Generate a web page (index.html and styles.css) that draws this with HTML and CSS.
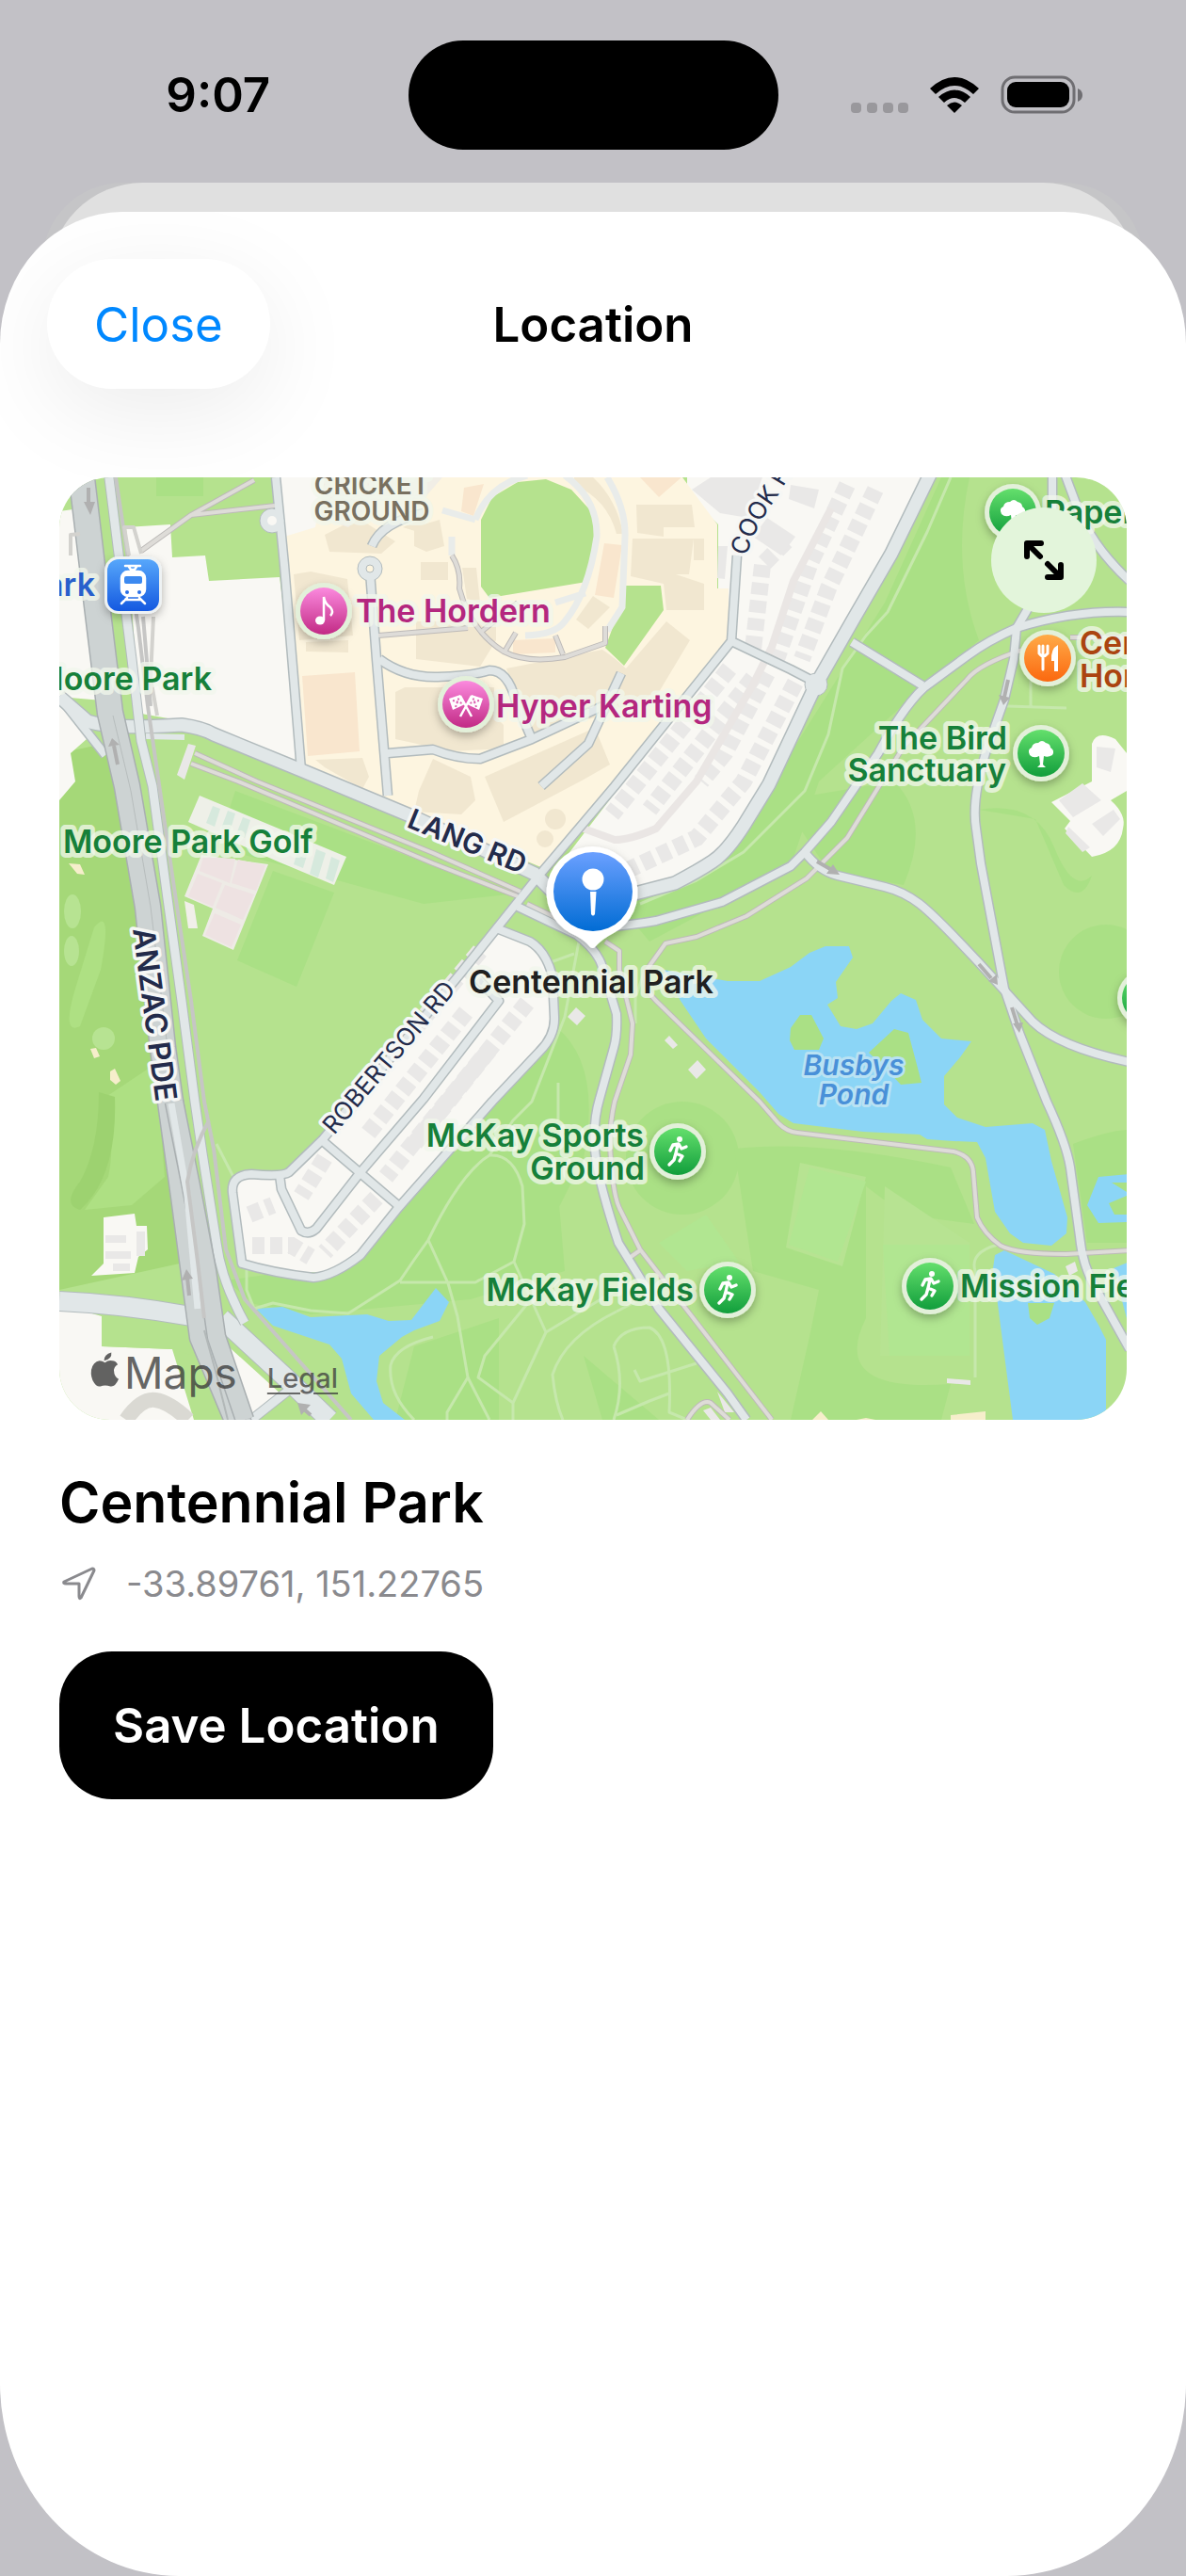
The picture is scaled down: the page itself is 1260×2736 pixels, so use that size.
FILE: index.html
```html
<!DOCTYPE html>
<html lang="en">
<head>
<meta charset="utf-8">
<meta name="viewport" content="width=device-width, initial-scale=1">
<title>Location</title>
<link rel="stylesheet" href="styles.css">
</head>
<body>
<div class="status">
  <div class="status-side"><time>9:07</time></div>
  <div class="island"></div>
  <div class="status-side">
    <svg class="signal" viewBox="0 0 246 42" aria-label="No signal, Wi-Fi on, battery full">
      <g fill="#99989c"><rect x="0" y="29" width="11" height="11" rx="4"/><rect x="17" y="29" width="11" height="11" rx="4"/><rect x="34" y="29" width="11" height="11" rx="4"/><rect x="50" y="29" width="11" height="11" rx="4"/></g>
      <path d="M84 14Q110-10 136 14L130 20Q110 2 90 20Z"/>
      <path d="M93 23Q110 8 127 23L121 29Q110 19 99 29Z"/>
      <path d="M102 32Q110 25 118 32L110 40Z"/>
      <rect x="161" y="2" width="76" height="37" rx="13" fill="none" stroke="#6f6e72" stroke-width="3"/>
      <rect x="166" y="7" width="66" height="27" rx="9"/>
      <path d="M241 14q5 2 5 7t-5 7z" fill="#6f6e72"/>
    </svg>
  </div>
</div>
<div class="stack">
<main class="sheet">
  <header class="bar">
    <button class="close" type="button">Close</button>
    <h1>Location</h1>
  </header>
  <section class="map" aria-label="Map">
    <svg class="canvas" viewBox="63 507 1134 1001">
      <defs>
        <linearGradient id="pink" x2="0" y2="1"><stop stop-color="#fb8ade"/><stop offset="1" stop-color="#c22a85"/></linearGradient>
        <linearGradient id="green" x2="0" y2="1"><stop stop-color="#64df6c"/><stop offset="1" stop-color="#119e3c"/></linearGradient>
        <linearGradient id="orange" x2="0" y2="1"><stop stop-color="#ffab48"/><stop offset="1" stop-color="#fb680f"/></linearGradient>
        <linearGradient id="sky" x2="0" y2="1"><stop stop-color="#57a7fb"/><stop offset="1" stop-color="#1459e0"/></linearGradient>
        <linearGradient id="blue" x2="0" y2="1"><stop stop-color="#6ba0ff"/><stop offset="1" stop-color="#016cd4"/></linearGradient>
        <filter id="lift" x="-50%" y="-50%" width="200%" height="200%"><feDropShadow dx="0" dy="4" stdDeviation="5" flood-opacity=".28"/></filter>
        <g id="wide">
          <path d="M63 740L93 766Q120 775 193 770Q215 773 227 780L320 818L440 868L568 928L590 950"/>
          <path d="M990 500L947 588L907 657L867 727L817 833L790 877Q772 905 757 915T717 938L640 958"/>
        </g>
        <g id="mid">
          <path d="M293 507L302 600L312 720L320 818"/>
          <path d="M783 590L777 681L653 835L570 933L490 1033L343 1210L307 1245Q300 1250 267 1247Q245 1248 247 1267L257 1342Q290 1352 333 1357Q355 1355 383 1333L423 1283L523 1170L573 1117Q590 1100 589 1080L587 1037Q580 1010 563 1000L530 987"/>
          <path d="M777 681L840 711L867 725M508 1040L530 1063L450 1167L383 1245L336 1305Q328 1312 320 1307L299 1263L297 1248M343 1212L425 1282"/>
          <path d="M550 963L613 993Q635 1010 640 1027L655 1077Q656 1100 652 1113L637 1167Q630 1190 632 1220T657 1320L700 1390L773 1480L793 1508"/>
          <path d="M640 985Q675 982 697 978L767 958L840 920L855 905L883 873L933 800Q960 750 982 730L1027 697Q1050 680 1080 667Q1140 648 1200 650"/>
          <path d="M905 682L980 728M1118 500L1118 600L1090 650L1080 667L1077 700L1067 743L1047 800Q1032 850 1037 880L1042 917L1067 1050L1083 1097L1112 1170Q1133 1215 1137 1240L1147 1313Q1150 1345 1165 1370L1200 1433"/>
          <path d="M1130 500L1145 540Q1160 580 1200 617M855 905Q870 925 890 930L940 942Q960 947 977 960Q1000 978 1067 1052L1097 1085Q1125 1112 1200 1128"/>
          <path d="M575 835L625 790L660 715"/>
          <path d="M393 607L400 700L412 845M403 700Q430 720 465 719T520 712Q540 712 548 745L565 785M412 800L460 796Q485 806 510 806L565 785L640 750M395 580Q405 555 450 545M63 740L112 802"/>
        </g>
        <g id="thin">
          <path d="M207 800L273 830L460 906L553 947M203 811L253 830L460 917L550 952M560 960L587 973L613 990"/>
          <path d="M643 1000L658 1010V1030L672 1087L670 1120L653 1170Q645 1205 650 1240Q652 1270 658 1283L680 1327L820 1508M670 1335L680 1328"/>
          <path d="M1087 690Q1040 705 1027 722L960 793L937 830L900 890L857 933L793 973L740 995L707 1002L687 1030Q683 1050 697 1063L807 1170L827 1193Q836 1202 847 1203L1013 1223Q1033 1228 1034 1245L1038 1293Q1045 1310 1063 1323Q1080 1332 1133 1332L1200 1328M1137 677H1200"/>
          <path d="M480 590Q490 605 488 625Q500 670 535 692Q560 705 600 698L643 683V665M510 672L550 640M402 675L497 667M535 694L548 672M590 675L598 695M150 585L203 547L270 510M203 547L292 537"/>
          <path d="M730 1508Q745 1485 755 1490L775 1508"/>
        </g>
        <g id="runner">
          <circle cx="2" cy="-13" r="3" fill="#fff"/>
          <path d="M-8-1L-5-7L1-8L4-3L9-5M0-7L-2 2L5 5L2 10M-2 2L-4 9L-9 14" fill="none" stroke="#fff" stroke-width="3.4" stroke-linecap="round" stroke-linejoin="round"/>
        </g>
        <g id="tree"><path d="M-12 2Q-15-4-10-6Q-9-11-3-11Q1-15 5-11Q10-10 10-6Q15-3 12 2Q7 5 3 3L2 12L5 15H-4L-1 12L-2 3Q-8 6-12 2Z" fill="#fff"/></g>
      </defs>

      <rect x="63" y="507" width="1134" height="1001" fill="#b5e28e"/>

      <!-- parkland shading -->
      <g fill="#aae085">
        <path d="M166 507h50v20h-50zM250 840L540 950L450 960L230 900ZM1030 507Q1010 600 1040 680L980 730L870 830L840 920L690 1000L640 940L840 800L940 640L1000 507ZM830 850L950 830Q990 870 960 940L880 925Z"/>
        <path d="M290 925L355 948L315 1048L252 1020ZM1040 860Q1100 850 1120 900T1160 930Q1150 960 1130 940L1100 870Z"/>
        <circle cx="1175" cy="1032" r="50"/><circle cx="725" cy="1230" r="60"/>
        <path d="M590 1090Q640 1130 620 1230L570 1330L480 1200L560 1130ZM240 1360L380 1340L480 1210L590 1230L600 1350L500 1380L330 1396L270 1385ZM780 1220Q870 1210 1010 1240L1035 1300L960 1290L920 1260L920 1400Q880 1480 1010 1470L1000 1508H840L860 1420L870 1370L800 1350ZM440 1430L530 1400V1508H420ZM1140 1215Q1180 1200 1200 1200V1320H1155ZM700 1508L620 1440L640 1508ZM63 970L110 980L90 1100L63 1080Z"/>
      </g>
      <path d="M63 800L110 790L135 830L160 990L185 1200L200 1340L63 1370Z" fill="#a5d878"/>
      <path d="M100 985Q120 960 107 1030L85 1090Q65 1100 80 1050ZM105 1170Q125 1200 115 1250L90 1285L140 1280L175 1250L165 1130Z" fill="#aee083"/>
      <path d="M105 1160L122 1165Q125 1250 85 1285Q65 1280 85 1255Q105 1220 105 1160Z" fill="#9dd270"/>
      <g fill="#b7e392"><circle cx="110" cy="1103" r="12"/><ellipse cx="77" cy="968" rx="9" ry="18"/><ellipse cx="76" cy="1010" rx="8" ry="16"/><path d="M850 1235L920 1250L895 1345L835 1325ZM940 1260L1030 1320V1440H935Z"/></g>
      <g fill="#b1e691"><path d="M860 1240L920 1255L890 1340L838 1322ZM938 1322H1030V1440H945ZM750 1290L785 1340L730 1350L700 1320Z"/></g>

      <!-- built-up land -->
      <g fill="#f9f8f4">
        <path d="M63 543L85 540L120 745L63 740ZM134 560L181 557L183 592L218 590L222 617L297 613L323 818L225 780L190 765L150 758L144 700Z"/>
        <path d="M63 743L112 800L92 785L75 800L80 830L63 850ZM290 507H345V600H300Z"/>
        <path d="M730 507H990L947 590L907 657L867 727L817 833L790 877L757 915L717 938L640 958L590 925L777 680L763 627V557L730 525Z"/>
        <path d="M530 987L563 1000L587 1037L590 1087L573 1117L523 1170L423 1283L383 1333L353 1352L290 1350L257 1342L247 1263L267 1245L307 1245L343 1210Z"/>
        <path d="M110 1293L143 1289L145 1302H156L157 1327L147 1335L143 1352L97 1355L110 1342Z"/>
        <path d="M63 1385L108 1398V1430L183 1433L206 1508H63ZM215 1405L300 1482L267 1508H247Z"/>
        <path d="M1117 852L1160 830V790Q1165 775 1185 785L1197 800V840L1180 850Q1197 865 1193 880Q1190 905 1160 910L1131 880L1137 872Z"/>
      </g>
      <path d="M302 570L335 560L345 507H725L762 557V625H774V677L577 922L323 815Z" fill="#fdf5e0"/>
      <g fill="#f1e7d0">
        <path d="M345 568L380 550L420 575L405 588L350 586ZM312 610L330 607L369 615L375 675L318 680ZM325 682L370 680V693L325 692ZM442 660H527V680L510 708L442 700ZM440 560L467 552L472 580L453 586L440 580ZM447 597H476V616H447ZM491 603H506L510 640L496 636Z"/>
        <path d="M430 730H525V760L535 770V795L480 798L420 785V735ZM538 710L640 690Q655 700 665 710L708 660L733 680L700 735L640 760L565 780Z"/>
        <path d="M515 825L632 773L648 812L620 828L535 873ZM676 536H735L738 560H705V570L677 566ZM672 572H748V595H737V572L732 610H718L748 620V648H708L705 620L670 612ZM630 633L648 645L625 668L612 658ZM610 507H630Q655 530 662 567H655Q645 530 610 515ZM335 807L385 805L392 825L385 838L345 815Z"/>
        <path d="M460 806L500 825L505 850L490 865L440 862L445 840ZM428 560L447 566L455 548"/>
        <circle cx="590" cy="870" r="11"/><circle cx="579" cy="891" r="9"/>
      </g>
      <g fill="#f9e6ce"><path d="M321 718L377 714L382 798L327 803ZM642 577L661 579L652 635L632 632ZM493 518L514 514L503 548L490 543ZM545 680L590 678V693L545 695ZM680 507H724L700 528Z"/></g>
      <path d="M345 507H470L450 530L400 532L370 560L340 550Z" fill="#f1eee6"/>
      <g fill="#b5e28e">
        <path d="M511 552L523 528L550 512L580 509L607 520L628 543L632 567L623 618L520 635L511 623ZM663 622H702L705 648L663 707L643 688L658 647ZM108 1398L200 1400L205 1440L183 1433L108 1430Z"/>
      </g>
      <path d="M505 552Q520 515 560 505M600 505Q635 530 634 570Q625 630 600 660Q590 674 558 675M590 640L622 630M480 570V590M470 542L505 552M645 507Q665 540 664 570L661 645L645 670" class="lane"/>

      <!-- rows of houses -->
      <g class="houses">
        <path d="M900 515L860 600L825 700" class="row"/>
        <path d="M930 520L880 625L852 700" class="row"/>
        <path d="M810 600L800 690" class="row"/>
        <path d="M835 575L810 600" class="row"/>
        <path d="M775 710L650 865" class="row"/>
        <path d="M800 720L690 860" class="row"/>
        <path d="M845 725L790 830L740 890L665 925" class="row"/>
        <path d="M815 715L770 800L745 830" class="row"/>
        <path d="M510 1010L350 1200M495 1075L390 1205" class="row"/>
        <path d="M560 1065L410 1250M520 1115L440 1215" class="row"/>
        <path d="M345 1230L320 1270M400 1272L345 1330M265 1290L290 1280M268 1323H310L330 1335" class="row"/>
      </g>
      <g fill="#e9e8e7">
        <path d="M763 580H773L770 615L762 614ZM735 520L755 507H810L795 550L765 545ZM840 515L870 520L865 540L838 530ZM800 570L815 550L845 570L830 590ZM112 1312H134V1320H112ZM112 1329H139V1337H112ZM120 1342H138V1350H120ZM145 1308H154V1334H145ZM1125 850L1150 832L1170 850L1140 868ZM1160 875L1183 860L1190 870L1172 888ZM1135 878L1158 900L1150 905L1132 885ZM1165 793L1185 795L1180 820L1165 815Z"/>
        <path d="M603 1080L612 1070L622 1079L613 1089ZM706 1105L711 1100L720 1110L715 1114ZM731 1136L741 1126L750 1136L740 1146ZM1132 1345L1142 1340L1145 1350L1136 1355ZM1006 1464L1031 1466V1471L1006 1469ZM188 823L200 790L208 792L196 828ZM747 1498L755 1495L765 1508H755ZM762 1478L780 1500L770 1500Z"/>
      </g>
      <path d="M883 540L843 617L820 687L800 727L740 830L697 880Q670 892 653 892L620 880" fill="none" stroke="#eae6e4" stroke-width="8"/>

      <!-- tennis courts and bunkers -->
      <path d="M212 845L368 910L355 940L295 915L200 873Z" fill="#eef0e8"/>
      <g fill="#d6e9dd"><path d="M226 856L234 859L228 878L219 874ZM242 861L250 864L244 884L235 880ZM258 868L266 871L260 890L251 886ZM336 902L346 906L338 932L329 928ZM352 910L361 914L354 937L346 933ZM318 898L328 902L322 922L312 918Z"/></g>
      <path d="M214 908L285 918L248 1009L215 994L226 965L196 952Z" fill="#eeebe6"/>
      <path d="M216 910L250 912L244 938L212 925ZM253 913L282 919L272 946L246 938ZM210 928L236 938L226 963L200 952ZM239 940L270 950L258 977L229 964ZM228 970L256 982L246 1006L218 993Z" fill="#eee2e2"/>
      <path d="M196 957L206 961L210 986H200Z" fill="#f1efe9"/>
      <g fill="#f6eecb"><path d="M73 917L85 918L90 929L82 928ZM96 1114L102 1113L106 1122L100 1124ZM117 1138L122 1135L128 1148L123 1152L117 1147ZM863 1508L872 1499L880 1508ZM910 1508L920 1506L930 1508ZM1010 1503L1047 1499V1508H1010Z"/></g>

      <!-- water -->
      <g fill="#8bd5f6">
        <path d="M705 1030L773 1042H807L840 1027L860 1012L877 1005H902L906 1017L888 1043L890 1060L879 1067L893 1090L910 1093L927 1087L947 1063L957 1055L973 1062L980 1083L1000 1103L1032 1106L1020 1123L1003 1143V1173L1017 1187L1047 1197L1097 1193L1110 1200L1117 1233L1134 1293L1133 1310L1117 1323L1087 1320L1073 1310L1057 1287L1047 1230L1038 1213L1013 1212L985 1210L977 1205L917 1202L843 1193L827 1183L807 1160L750 1103L723 1063Z"/>
        <path d="M1055 1347L1057 1333L1067 1328L1120 1353L1153 1383L1167 1407L1175 1423V1508H1076ZM1155 1280L1167 1250L1200 1247V1298L1167 1299ZM1183 1347L1200 1340V1412Z"/>
        <path d="M272 1390L300 1388L330 1399L390 1396L413 1403L437 1402L463 1368L477 1383L467 1403L440 1413L427 1420L403 1440L400 1467L407 1490L430 1508H397L373 1480L363 1443L350 1428L317 1417L290 1408Z"/>
      </g>
      <g fill="#aae085"><path d="M840 1092L850 1078L862 1078L875 1103L870 1115H844L839 1105ZM923 1118L950 1093L965 1097L973 1127L979 1150L957 1152L943 1137ZM1092 1384H1120L1115 1400L1102 1407L1094 1400ZM1181 1256H1200V1268ZM1178 1278L1197 1270V1290L1184 1290Z"/></g>

      <!-- footpaths -->
      <g class="path">
        <path d="M1010 507L985 565L943 650L920 675L895 710L880 780L855 840L790 905L740 935L680 960M615 1000L600 1080L565 1170L545 1190L520 1227Q490 1245 455 1317L440 1338L425 1360L370 1395L330 1392L290 1384L270 1390L262 1370V1345M520 1227Q545 1225 555 1260L557 1300L546 1340L505 1362L425 1362M455 1317L476 1363L486 1398L497 1463L475 1500V1508M546 1340L580 1415L545 1490V1508M560 1385L515 1440L508 1463L545 1490M580 1415L655 1370M655 1393Q600 1420 587 1460Q590 1490 598 1508"/>
        <path d="M655 1393L680 1380M652 1430Q660 1410 690 1410Q715 1420 711 1500L730 1508M652 1430Q665 1470 652 1508M674 1455L680 1467L740 1448M655 1503L690 1488L711 1480M1036 1463V1350Q1030 1330 1060 1322M497 1463L520 1508M593 1150V1190M230 1215L248 1250M675 1087V1060L685 1030M460 1420Q420 1430 415 1450Q412 1480 440 1508M585 1022L610 1013M1070 750L1133 752M1095 720V752"/>
      </g>

      <!-- roads -->
      <use href="#thin" class="thin-case"/>
      <use href="#mid" class="mid-case"/>
      <use href="#wide" class="wide-case"/>
      <circle cx="867" cy="727" r="12" fill="#e1e7e8" stroke="#b2bbbd" stroke-width="1"/>
      <circle cx="289" cy="553" r="13" fill="#e1e7e8" stroke="#b2bbbd"/>
      <circle cx="393" cy="604" r="13" fill="#e1e7e8" stroke="#b2bbbd"/>
      <use href="#thin" class="thin-fill"/>
      <use href="#mid" class="mid-fill"/>
      <use href="#wide" class="wide-fill"/>
      <circle cx="289" cy="553" r="5" fill="#f9f8f4"/>
      <circle cx="393" cy="604" r="4" fill="#fdf5e0" stroke="#b2bbbd"/>

      <!-- Anzac Parade and light rail -->
      <g fill="none" stroke-linejoin="round">
        <path d="M63 1382Q130 1385 203 1398M235 1400L300 1460L350 1508" stroke="#b2bbbd" stroke-width="22"/>
        <path d="M267 1508L305 1478" stroke="#b2bbbd" stroke-width="11"/>
        <path d="M63 1382Q130 1385 203 1398M235 1400L300 1460L350 1508" stroke="#e1e7e8" stroke-width="20"/>
        <path d="M267 1508L305 1478" stroke="#e1e7e8" stroke-width="9"/>
        <path d="M155 782L196 783" stroke="#e1e7e8" stroke-width="6"/>
        <path d="M115 500L125 580L140 700L150 787L162 835L177 947L193 1063L207 1170L215 1225L230 1320Q235 1360 260 1405" stroke="#b2bbbd" stroke-width="11"/>
        <path d="M115 500L125 580L140 700L150 787L162 835L177 947L193 1063L207 1170L215 1225L230 1320Q235 1360 260 1405" stroke="#e1e7e8" stroke-width="9"/>
        <path d="M86 500L103 643L117 757L135 835L157 963L173 1113L195 1270L215 1420L257 1520" stroke="#a9afb1" stroke-width="29"/>
        <path d="M86 500L103 643L117 757L135 835L157 963L173 1113L195 1270L215 1420L257 1520" stroke="#cdd3d3" stroke-width="26"/>
        <path d="M185 1170L203 1260L220 1350L230 1420L260 1508" stroke="#a9afb1" stroke-width="21"/>
        <path d="M185 1170L203 1260L220 1350L230 1420L260 1508" stroke="#cdd3d3" stroke-width="18"/>
        <path d="M182 1172L199 1270L210 1390" stroke="#e1e7e8" stroke-width="7"/>
        <path d="M217 1413L230 1460L242 1508" stroke="#b2b8b8" stroke-width="2"/>
        <path d="M120 760L139 840L160 963L178 1113" stroke="#b7bdbd" stroke-width="1"/>
        <path d="M123 507L132 567L147 667L157 750L170 840L185 943L203 1063L217 1170L227 1220L240 1327L260 1380L373 1508M152 655L160 750M222 1190Q205 1220 199 1255L210 1340L217 1400" class="rail"/>
        <path d="M137 590L132 560L142 560L150 588M75 590L75 568L85 567M163 655L160 720L167 760" stroke="#d3d2ce" stroke-width="4"/>
        <path d="M134 1508Q150 1485 165 1487T200 1508" stroke="#dad9d3" stroke-width="16"/>
      </g>
      <g class="arrows">
        <path d="M94 518V535M125 812L121 792M201 1376L199 1357M330 1503L320 1494M1071 722L1067 740M868 915L882 923M1040 1024L1053 1039M1075 1070L1081 1089"/>
        <path d="M89 533L96 547L101 533ZM115 793L119 784L127 791ZM193 1360L198 1348L205 1358ZM316 1490L330 1492L320 1503ZM1061 738L1066 749L1073 741ZM885 918L892 929L878 928ZM1059 1035L1060 1046L1050 1042ZM1076 1087L1083 1097L1087 1086Z" fill="#b0b0b0" stroke="none"/>
      </g>

      <!-- street names -->
      <path id="anzac" d="M141 987L168 1190" fill="none"/>
      <path id="lang" d="M431 878L575 937" fill="none"/>
      <path id="rob" d="M355 1206L500 1034" fill="none"/>
      <path id="cook" d="M793 591Q801 562 826 527L870 455" fill="none"/>
      <g class="street">
        <text class="bold big"><textPath href="#anzac">ANZAC PDE</textPath></text>
        <text class="bold"><textPath href="#lang">LANG RD</textPath></text>
        <text><textPath href="#rob">ROBERTSON RD</textPath></text>
        <text><textPath href="#cook">COOK RD</textPath></text>
      </g>

      <!-- places -->
      <g class="place">
        <g class="area"><text x="395" y="525">CRICKET</text><text x="395" y="553">GROUND</text></g>
        <g class="transit"><text x="101" y="633" class="end">Moore Park</text></g>
        <g class="park">
          <text x="225" y="733" class="end">Moore Park</text>
          <text x="67" y="906">Moore Park Golf</text>
          <text x="1110" y="556">Paperbark</text>
          <text x="1070" y="796" class="end">The Bird</text><text x="1069" y="830" class="end">Sanctuary</text>
          <text x="684" y="1218" class="end">McKay Sports</text><text x="685" y="1253" class="end">Ground</text>
          <text x="737" y="1382" class="end">McKay Fields</text>
          <text x="1020" y="1378">Mission Fields</text>
        </g>
        <g class="venue"><text x="378" y="661">The Hordern</text><text x="527" y="762">Hyper Karting</text></g>
        <g class="food"><text x="1147" y="695">Centennial</text><text x="1147" y="730">Homestead</text></g>
        <g class="water"><text x="907" y="1142">Busbys</text><text x="907" y="1173">Pond</text></g>
        <text x="628" y="1055" class="chosen">Centennial Park</text>
      </g>

      <g filter="url(#lift)">
        <rect x="111" y="591" width="61" height="61" rx="15" fill="#eef2f3"/>
        <g class="halo"><circle cx="344" cy="649" r="30"/><circle cx="495" cy="748" r="30"/><circle cx="1106" cy="800" r="30"/><circle cx="1076" cy="544" r="30"/><circle cx="1113" cy="699" r="30"/><circle cx="720" cy="1223" r="30"/><circle cx="773" cy="1370" r="30"/><circle cx="988" cy="1366" r="30"/><circle cx="1217" cy="1060" r="30"/></g>
      </g>
      <rect x="114" y="594" width="55" height="55" rx="12" fill="url(#sky)"/>
      <g fill="url(#pink)"><circle cx="344" cy="649" r="25"/><circle cx="495" cy="748" r="25"/></g>
      <g fill="url(#green)"><circle cx="1106" cy="800" r="25"/><circle cx="1076" cy="544" r="25"/><circle cx="720" cy="1223" r="25"/><circle cx="773" cy="1370" r="25"/><circle cx="988" cy="1366" r="25"/><circle cx="1217" cy="1060" r="25"/></g>
      <circle cx="1113" cy="699" r="25" fill="url(#orange)"/>
      <use href="#runner" x="720" y="1223"/><use href="#runner" x="773" y="1370"/><use href="#runner" x="988" y="1366"/>
      <use href="#tree" x="1106" y="800"/><use href="#tree" x="1076" y="544"/>
      <!-- tram -->
      <g fill="none" stroke="#fff" stroke-width="2.5" stroke-linecap="round">
        <path d="M133 601H149M137 602L139 605H143L145 602M135 635L129 641M148 635L154 641M133 637H149"/>
        <rect x="129" y="607" width="25" height="26" rx="7" fill="#fff"/>
      </g>
      <rect x="132" y="612" width="19" height="8" rx="2" fill="#3c89f0"/><circle cx="135" cy="629" r="2" fill="#2a6fe8"/><circle cx="148" cy="629" r="2" fill="#2a6fe8"/>
      <!-- note -->
      <ellipse cx="340" cy="659" rx="5" ry="4.500" fill="#fff"/><path d="M344 659V634Q345 641 351 645Q355 650 351 654" fill="none" stroke="#fff" stroke-width="2.500"/>
      <!-- flags -->
      <path d="M501 761L489 739M489 761L501 739" stroke="#fff" stroke-width="2.500"/><path d="M477 742L489 738L494 748L481 754ZM513 742L501 738L496 748L509 754Z" fill="#fff"/><path d="M481 744L491 747M484 751L488 740M509 744L499 747M506 751L502 740" stroke="#dc5fb0" stroke-width="2" stroke-dasharray="2 2"/>
      <!-- fork and knife -->
      <path d="M1104 686V694Q1108 700 1113 694V686M1108 686V711" fill="none" stroke="#fff" stroke-width="3" stroke-linecap="round"/><path d="M1124 685V713H1120V702H1117Q1116 689 1124 685Z" fill="#fff"/>
      <!-- chosen place -->
      <g filter="url(#lift)"><path d="M630 899A49 49 0 0 1 652 991Q640 997 632 1006Q630 1008 627 1006Q620 997 606 991A49 49 0 0 1 630 899Z" fill="#fff"/></g>
      <circle cx="630" cy="947" r="42" fill="url(#blue)"/>
      <circle cx="630" cy="934" r="11.500" fill="#fff"/><path d="M627 947H633.500L632 971Q630 974 628 971Z" fill="#fff"/>
    </svg>
    <button class="expand" type="button" aria-label="Expand map">
      <svg viewBox="0 0 44 44"><path d="M4 4H19M4 4V18M5 5L18 18M40 40H26M40 40V27M39 39L26 26"/></svg>
    </button>
    <div class="credit">
      <span class="brand"><svg viewBox="0 0 32 38"><path d="M16 11Q20 8 24 9Q28 9 30 13Q25 16 26 21Q26 26 31 29Q27 38 22 37Q16 35 11 37Q7 38 4 33Q0 27 1 19Q3 10 10 9Q13 9 16 11ZM15 9Q15 2 23 0Q24 7 15 9Z"/></svg>Maps</span>
      <a href="#legal">Legal</a>
    </div>
  </section>
  <section class="details">
    <h2>Centennial Park</h2>
    <p class="coords"><svg viewBox="0 0 36 36"><path d="M2 16L32 2Q34 2 34 4L20 33Q18 35 18 31V18H4Q1 18 2 16Z"/></svg>-33.89761, 151.22765</p>
    <button class="save" type="button">Save Location</button>
  </section>
</main>
</div>
</body>
</html>
```
FILE: styles.css
```css
* { box-sizing: border-box; }
body {
  margin: 0;
  min-height: 100vh;
  display: flex;
  flex-direction: column;
  background: #c2c1c6;
  color: #000;
  font-family: Inter, "Liberation Sans", sans-serif;
}
h1, h2, p { margin: 0; }
button { border: 0; font: inherit; }

.status {
  display: grid;
  grid-template-columns: 1fr 393px 1fr;
  align-items: center;
  padding: 43px 0 66px;
}
.status-side { display: flex; justify-content: center; }
.status-side time { font-size: 51px; font-weight: 600; line-height: 60px; padding-left: 30px; }
.island { height: 116px; border-radius: 58px; background: #000; }
.signal { width: 246px; height: 42px; margin-right: 32px; }

.stack { position: relative; flex: 1; display: flex; }
.stack::before, .stack::after {
  content: "";
  position: absolute;
  top: -31px;
  height: 200px;
}
.stack::before { left: 45px; right: 45px; border-radius: 85px; background: #c5c5c7; }
.stack::after { left: 52px; right: 52px; border-radius: 110px; background: #e0e0e0; }
.sheet {
  position: relative;
  z-index: 1;
  flex: 1;
  min-width: 0;
  padding: 50px 63px 200px;
  background: #fff;
  border-radius: 130px 130px 190px 190px / 140px 140px 205px 205px;
  overflow: hidden;
}
.bar {
  display: grid;
  grid-template-columns: 1fr auto 1fr;
  align-items: center;
  margin: 0 -13px 94px;
}
.close {
  justify-self: start;
  height: 138px;
  padding: 2px 50px 0;
  border-radius: 69px;
  background: #fff;
  color: #0088ff;
  font-size: 51px;
  line-height: 60px;
  box-shadow: 0 24px 100px rgba(0, 0, 0, .08);
}
h1 { padding-top: 2px; font-size: 51px; font-weight: 600; line-height: 60px; }

.map {
  position: relative;
  border-radius: 54px;
  overflow: hidden;
}
.canvas { display: block; width: 100%; height: auto; }
.expand {
  position: absolute;
  top: 32px;
  right: 32px;
  width: 112px;
  height: 112px;
  display: grid;
  place-items: center;
  padding: 0;
  border-radius: 50%;
  background: #e3f5db;
}
.expand svg { width: 44px; height: 44px; fill: none; stroke: #000; stroke-width: 6; stroke-linecap: round; stroke-linejoin: round; }
.credit {
  position: absolute;
  left: 33px;
  bottom: 22px;
  display: flex;
  align-items: baseline;
  gap: 32px;
  color: rgba(60, 60, 60, .8);
}
.brand { display: flex; align-items: center; gap: 5px; font-size: 46px; line-height: 56px; }
.brand svg { width: 31px; height: 38px; margin-bottom: 6px; fill: currentColor; }
.credit a { color: rgba(60, 60, 60, .75); font-size: 29px; font-weight: 500; text-underline-offset: 5px; text-decoration-skip-ink: auto; }

.details { display: flex; flex-direction: column; align-items: flex-start; }
h2 { margin-top: 50px; font-size: 59px; font-weight: 600; line-height: 76px; }
.coords {
  display: flex;
  align-items: center;
  gap: 32px;
  margin-top: 24px;
  padding-left: 3px;
  color: #8a8a8e;
  font-size: 38px;
  line-height: 48px;
}
.coords svg { width: 36px; height: 36px; fill: none; stroke: currentColor; stroke-width: 3; stroke-linejoin: round; }
.save {
  margin-top: 48px;
  padding: 48px 57px;
  border-radius: 56px;
  background: #000;
  color: #fff;
  font-size: 51px;
  font-weight: 600;
  line-height: 61px;
}

/* Map strokes */
.canvas use { fill: none; stroke-linejoin: round; stroke-linecap: butt; }
.thin-case { stroke: #bdbab8; stroke-width: 6px; }
.thin-fill { stroke: #dedcd8; stroke-width: 4px; }
.mid-case { stroke: #b2bbbd; stroke-width: 11px; }
.mid-fill { stroke: #e1e7e8; stroke-width: 8px; }
.wide-case { stroke: #b2bbbd; stroke-width: 16px; }
.wide-fill { stroke: #e1e7e8; stroke-width: 13px; }
.lane { fill: none; stroke: #e9ecea; stroke-width: 7px; }
.path { fill: none; stroke: #c6e8ac; stroke-width: 3px; stroke-linejoin: round; }
.row { fill: none; stroke: #e9e8e7; stroke-width: 18px; stroke-dasharray: 13px 6px; }
.rail { stroke: #c6c6c5; stroke-width: 4px; }
.arrows { fill: none; stroke: #b0b0b0; stroke-width: 4px; }
.halo { fill: #e3f0da; }

/* Map labels */
.street text, .place text { paint-order: stroke; stroke-linejoin: round; }
.street text { font-size: 26px; fill: #232b4b; stroke: #f6f7f5; stroke-width: 7px; }
.street .bold { font-size: 30px; font-weight: 600; }
.street .big { font-size: 32px; }
.place text { font-size: 34px; font-weight: 600; stroke: rgba(241, 247, 236, .75); stroke-width: 10px; }
.place .end { text-anchor: end; }
.place .park { fill: #16803a; }
.place .venue { fill: #b4277f; }
.place .food { fill: #ab4410; }
.place .transit { fill: #2860cc; }
.place .chosen { fill: #202020; text-anchor: middle; }
.place .area text { font-size: 28px; fill: #787060; text-anchor: middle; }
.place .water text { font-size: 30px; font-style: italic; fill: #4990d8; stroke: #b9e2f3; stroke-width: 6px; text-anchor: middle; }
```
